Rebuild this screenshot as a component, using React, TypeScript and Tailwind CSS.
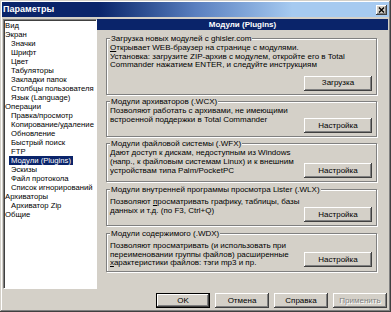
import React from 'react';

const raised = "shadow-[inset_-1px_-1px_0_#404040,inset_1px_1px_0_#ffffff,inset_-2px_-2px_0_#808080,inset_2px_2px_0_#d4d0c8]";

const tree: [string, number][] = [
  ["Вид", 0], ["Экран", 0], ["Значки", 1], ["Шрифт", 1], ["Цвет", 1], ["Табуляторы", 1],
  ["Закладки папок", 1], ["Столбцы пользователя", 1], ["Язык (Language)", 1], ["Операции", 0],
  ["Правка/просмотр", 1], ["Копирование/удаление", 1], ["Обновление", 1], ["Быстрый поиск", 1],
  ["FTP", 1], ["Модули (Plugins)", 1], ["Эскизы", 1], ["Файл протокола", 1],
  ["Список игнорирований", 1], ["Архиваторы", 0], ["Архиватор Zip", 1], ["Общие", 0],
];

function Button({ label, className = "", disabled = false, isDefault = false }: { label: string; className?: string; disabled?: boolean; isDefault?: boolean }) {
  return (
    <div className={`${className} ${isDefault ? "border border-black" : ""} bg-[#d4d0c8] h-[15px]`}>
      <div className={`${raised} w-full h-full flex items-center justify-center leading-none ${disabled ? "text-[#808080] [text-shadow:1px_1px_0_#ffffff]" : ""}`}>
        {label}
      </div>
    </div>
  );
}

function Group({ title, className, children }: { title: string; className: string; children: React.ReactNode }) {
  return (
    <div className={`relative ml-[9px] w-[271px] border border-[#808080] shadow-[inset_1px_1px_0_#ffffff,1px_1px_0_#ffffff] ${className}`}>
      <span className="absolute left-[3px] top-[-5px] bg-[#d4d0c8] px-[1px] leading-[9px] whitespace-nowrap">{title}</span>
      {children}
    </div>
  );
}

export default function App() {
  return (
    <div className="w-[391px] h-[312px] bg-[#d4d0c8] p-[2px] flex flex-col text-[8px] text-black font-['Liberation_Sans',Arial,sans-serif] shadow-[inset_-1px_-1px_0_#404040,inset_1px_1px_0_#d4d0c8,inset_-2px_-2px_0_#808080,inset_2px_2px_0_#ffffff] overflow-hidden">
      {/* title bar */}
      <div className="h-[15px] flex items-center pl-[1px] pr-[2px] bg-linear-to-r from-[#0a246a] from-25% via-[#5a7fbf] via-50% to-[#a6caf0] to-75%">
        <span className="flex-1 text-white font-bold text-[9px] leading-none">Параметры</span>
        <div className={`${raised} w-[11px] h-[10px] bg-[#d4d0c8] flex items-center justify-center`}>
          <svg width="7" height="6" viewBox="0 0 7 6">
            <path d="M1 0.5 L6 5.5 M6 0.5 L1 5.5" stroke="#000" strokeWidth="1.4" />
          </svg>
        </div>
      </div>

      <div className="flex mt-[2px] ml-[1px] mr-[1px]">
        {/* tree */}
        <div className="w-[94px] h-[270px] bg-white border border-t-[#808080] border-l-[#808080] border-r-white border-b-white shadow-[inset_1px_1px_0_#404040] overflow-hidden">
          <div className="pt-[1px] pl-[1px] text-[7.7px]">
            {tree.map(([name, lvl]) => (
              <div key={name} className={`h-[9px] leading-[9px] whitespace-nowrap ${lvl ? "pl-[4px]" : ""}`}>
                {name === "Модули (Plugins)" ? (
                  <span className="bg-[#0a246a] text-white px-[2px] inline-block leading-[9px]">{name}</span>
                ) : (
                  <span className={lvl ? "pl-[2px]" : ""}>{name}</span>
                )}
              </div>
            ))}
          </div>
        </div>

        {/* right panel */}
        <div className="flex-1 flex flex-col">
          <div className="h-[11px] bg-[#0a246a] text-white font-bold flex items-center justify-center leading-none">
            Модули (Plugins)
          </div>

          <Group title="Загрузка новых модулей с ghisler.com" className="mt-[8px] h-[57px]">
            <div className="pl-[3px] pt-[5px] leading-[8.5px] whitespace-nowrap">
              <div><span className="underline">О</span>ткрывает WEB-браузер на странице с модулями.</div>
              <div>Установка: загрузите ZIP-архив с модулем, откройте его в Total</div>
              <div>Commander нажатием ENTER, и следуйте инструкциям</div>
            </div>
            <div className="flex justify-end pr-[4px] mt-[6px]">
              <Button label="Загрузка" className="w-[68px]" />
            </div>
          </Group>

          <Group title="Модули архиваторов (.WCX)" className="mt-[6px] h-[36px] flex items-end justify-between pb-[3px] pr-[4px]">
            <div className="self-start pl-[3px] pt-[4px] leading-[9px] whitespace-nowrap">
              <div>Позволяют работать с архивами, не имеющими</div>
              <div>встроенной поддержки в Total Commander</div>
            </div>
            <Button label="Настройка" className="w-[68px]" />
          </Group>

          <Group title="Модули файловой системы (.WFX)" className="mt-[6px] h-[39px] flex items-end justify-between pb-[3px] pr-[4px]">
            <div className="self-start pl-[3px] pt-[4px] leading-[9px] whitespace-nowrap">
              <div>Дают доступ к дискам, недоступным из Windows</div>
              <div>(напр., к файловым системам Linux) и к внешним</div>
              <div>устройствам типа Palm/PocketPC</div>
            </div>
            <Button label="Настройка" className="w-[68px]" />
          </Group>

          <Group title="Модули внутренней программы просмотра Lister (.WLX)" className="mt-[7px] h-[37px] flex items-end justify-between pb-[3px] pr-[4px]">
            <div className="self-start pl-[3px] pt-[7px] leading-[9px] whitespace-nowrap">
              <div>Позволяют <span className="underline">п</span>росматривать графику, таблицы, базы</div>
              <div>данных и т.д. (по F3, Ctrl+Q)</div>
            </div>
            <Button label="Настройка" className="w-[68px]" />
          </Group>

          <Group title="Модули содержимого (.WDX)" className="mt-[7px] h-[39px] flex items-end justify-between pb-[4px] pr-[4px]">
            <div className="self-start pl-[3px] pt-[8px] leading-[8.5px] whitespace-nowrap">
              <div>Позволяют просматривать (и использовать при</div>
              <div>переименовании группы файлов) расширенные</div>
              <div><span className="underline">х</span>арактеристики файлов: тэги mp3 и пр.</div>
            </div>
            <Button label="Настройка" className="w-[68px]" />
          </Group>
        </div>
      </div>

      {/* bottom buttons */}
      <div className="flex justify-end gap-[5px] mt-[4px] pr-[2px]">
        <Button label="OK" className="w-[54px]" isDefault />
        <Button label="Отмена" className="w-[54px]" />
        <Button label="Справка" className="w-[54px]" />
        <Button label="Применить" className="w-[54px]" disabled />
      </div>
    </div>
  );
}
